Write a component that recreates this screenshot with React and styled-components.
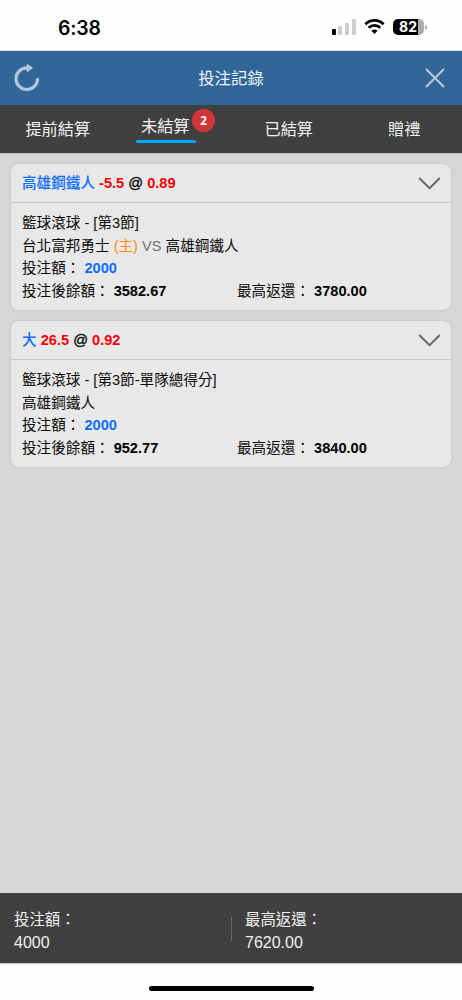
import React from "react";
import styled, { createGlobalStyle } from "styled-components";

const GlobalStyle = createGlobalStyle`
  * { box-sizing: border-box; }
  body {
    margin: 0;
    background: #fff;
    font-family: "Liberation Sans", "Noto Sans CJK TC", sans-serif;
    -webkit-font-smoothing: antialiased;
  }
`;

const Screen = styled.div`
  display: flex;
  flex-direction: column;
  width: 462px;
  height: 1000px;
  overflow: hidden;
  background: #fefefe;
`;

const StatusBar = styled.header`
  display: flex;
  justify-content: space-between;
  height: 51px;
  padding: 0 35px 0 58px;
  border-bottom: 1px solid #d9dde0;
`;

const Clock = styled.span`
  margin-top: 16px;
  font: 600 19.4px/24px Inter, sans-serif;
  letter-spacing: -0.15px;
  color: #000;
`;

const StatusIcons = styled.div`
  display: flex;
  margin-top: 18px;
  height: 18px;
  svg { display: block; }
`;

const Signal = styled.div`
  display: flex;
  align-items: flex-end;
  gap: 2.6px;
  height: 16.6px;
  margin-right: 8.5px;
`;

const SignalBar = styled.i`
  width: 4px;
  height: ${(p) => p.$height}px;
  border-radius: 1.2px;
  background: ${(p) => (p.$on ? "#000" : "#cdcdcd")};
`;

const Battery = styled.div`
  display: flex;
  align-items: center;
  margin: 1px 0 0 8px;
  height: 16px;
`;

const BatteryCell = styled.div`
  width: 31px;
  height: 16px;
  padding-left: 6px;
  border-radius: 5px;
  background: linear-gradient(90deg, #000 0 25px, #ababab 25px);
  font: 700 14px/16px Inter, sans-serif;
  letter-spacing: 0.1px;
  color: #fff;
`;

const BatteryTip = styled.i`
  width: 2px;
  height: 5px;
  margin-left: 1px;
  border-radius: 0 2px 2px 0;
  background: #b5b5b5;
`;

const TitleBar = styled.div`
  display: grid;
  grid-template-columns: 60px 1fr 60px;
  align-items: center;
  height: 54px;
  background: #316698;
  color: #eef3f7;
`;

const Title = styled.h1`
  margin: 0 0 1px;
  font-size: 16.4px;
  font-weight: 400;
  line-height: 24px;
  text-align: center;
`;

const IconButton = styled.button`
  display: flex;
  justify-content: ${(p) => (p.$end ? "flex-end" : "flex-start")};
  padding: ${(p) => (p.$end ? "0 17px 1px 0" : "0 0 3px 13px")};
  border: 0;
  background: none;
  color: #b4c7da;
  svg { display: block; }
`;

const Tabs = styled.nav`
  display: grid;
  grid-template-columns: repeat(4, 1fr);
  height: 48px;
  background: #404040;
`;

const Tab = styled.div`
  display: flex;
  flex-direction: column;
  align-items: center;
  padding-top: ${(p) => (p.$active ? "9px" : "12px")};
  color: #f1f1f1;
  font-size: 16.2px;
  line-height: 24px;
`;

const TabLabel = styled.span`
  position: relative;
  left: ${(p) => p.$shift || 0}px;
`;

const Underline = styled.i`
  width: 60px;
  height: 3.4px;
  margin: 2px 15px 0 0;
  border-radius: 2px;
  background: #00a6ff;
`;

const Badge = styled.span`
  position: absolute;
  left: 51px;
  top: -5px;
  width: 23px;
  height: 23px;
  border-radius: 50%;
  background: #d23539;
  color: #fff;
  font: 700 11.5px/23px "Noto Sans", sans-serif;
  text-align: center;
`;

const Bets = styled.main`
  flex: 1;
  display: flex;
  flex-direction: column;
  gap: 11px;
  padding: 11px 11px 0;
  background: #d7d7d7;
  box-shadow: inset 0 1px #bdbdbd;
`;

const Card = styled.article`
  height: 146px;
  border-radius: 8px;
  background: #e8e8e8;
  box-shadow: 0 0 3px rgba(0, 0, 0, 0.12);
  font-size: 14.6px;
  color: #0c0c0c;
`;

const CardHead = styled.div`
  display: flex;
  align-items: center;
  justify-content: space-between;
  height: 39px;
  padding: 0 11px;
  border-bottom: 1px solid #c8c8c8;
  line-height: 22px;
  svg { display: block; }
`;

const Pick = styled.div`
  font-weight: 500;
  color: #0d6efd;
`;

const Odds = styled.b`
  color: ${(p) => (p.$plain ? "#111" : "#fb0007")};
  font-weight: ${(p) => (p.$plain ? 400 : 700)};
  -webkit-text-stroke: ${(p) => (p.$plain ? "0.4px #111" : "0")};
`;

const CardBody = styled.div`
  padding: 9px 11px;
  line-height: 22.6px;
  white-space: nowrap;
`;

const Line = styled.div`
  display: grid;
  grid-template-columns: ${(p) => (p.$split ? "215px 1fr" : "1fr")};
`;

const Amount = styled.b`
  color: ${(p) => (p.$blue ? "#0d6efd" : "#000")};
`;

const Home = styled.span`
  color: #fb8c0a;
`;

const Versus = styled.span`
  color: #707070;
`;

const Totals = styled.footer`
  display: grid;
  grid-template-columns: 1fr 1fr;
  height: 70px;
  padding-top: 16px;
  background: #404040;
  color: #f0f0f0;
`;

const Total = styled.div`
  position: relative;
  padding-left: 14px;
  font-size: 15.4px;
  line-height: 22.5px;
  & + &::before {
    content: "";
    position: absolute;
    left: 0;
    top: 8px;
    width: 1px;
    height: 24px;
    background: #686868;
  }
`;

const TotalValue = styled.div`
  font-size: 16px;
`;

const HomeArea = styled.div`
  display: flex;
  justify-content: center;
  height: 37px;
  padding-top: 22px;
  border-top: 1px solid #c6c6c6;
`;

const HomeIndicator = styled.i`
  width: 165px;
  height: 5.4px;
  border-radius: 3px;
  background: #000;
`;

const bets = [
  {
    pick: "高雄鋼鐵人",
    line: "-5.5",
    odds: "0.89",
    market: "籃球滾球 - [第3節]",
    home: "台北富邦勇士",
    away: "高雄鋼鐵人",
    balance: "3582.67",
    payout: "3780.00",
  },
  {
    pick: "大",
    line: "26.5",
    odds: "0.92",
    market: "籃球滾球 - [第3節-單隊總得分]",
    away: "高雄鋼鐵人",
    balance: "952.77",
    payout: "3840.00",
  },
];

function BetCard({ bet }) {
  return (
    <Card>
      <CardHead>
        <Pick>
          {bet.pick} <Odds>{bet.line}</Odds> <Odds $plain>@</Odds> <Odds>{bet.odds}</Odds>
        </Pick>
        <svg width="22" height="13" viewBox="0 0 22 13" fill="none" stroke="#676767" strokeWidth="2">
          <path d="M1.2 1 11.6 11.2 21.8 1" />
        </svg>
      </CardHead>
      <CardBody>
        <Line>{bet.market}</Line>
        <Line>
          {bet.home ? (
            <span>
              {bet.home} <Home>(主)</Home> <Versus>VS</Versus> {bet.away}
            </span>
          ) : (
            <span>{bet.away}</span>
          )}
        </Line>
        <Line>
          <span>投注額： <Amount $blue>2000</Amount></span>
        </Line>
        <Line $split>
          <span>投注後餘額： <Amount>{bet.balance}</Amount></span>
          <span>最高返還： <Amount>{bet.payout}</Amount></span>
        </Line>
      </CardBody>
    </Card>
  );
}

export default function App() {
  return (
    <Screen>
      <GlobalStyle />
      <StatusBar>
        <Clock>6:38</Clock>
        <StatusIcons>
          <Signal>
            <SignalBar $on $height={6} />
            <SignalBar $height={8.6} />
            <SignalBar $height={12} />
            <SignalBar $height={15.4} />
          </Signal>
          <svg width="21" height="17" viewBox="0 0 21 17" fill="none" stroke="#000" strokeWidth="2.7">
            <path d="M1.4 6.2Q5.3 2.4 10.5 2.4T19.6 6.2" />
            <path d="M4.7 9.8Q7.2 7.3 10.5 7.3T16.3 9.8" />
            <path d="M7.4 12.8Q10.5 10.2 13.6 12.8L10.5 16Z" fill="#000" stroke="none" />
          </svg>
          <Battery>
            <BatteryCell>82</BatteryCell>
            <BatteryTip />
          </Battery>
        </StatusIcons>
      </StatusBar>
      <TitleBar>
        <IconButton aria-label="重新整理">
          <svg width="28" height="30" viewBox="0 0 28 30">
            <path d="M14 5.9A10.8 10.8 0 1 0 24.6 16.3" fill="none" stroke="currentColor" strokeWidth="3.2" />
            <path d="M13.8 1.5 20.2 6 13.8 10.5Z" fill="currentColor" />
          </svg>
        </IconButton>
        <Title>投注記錄</Title>
        <IconButton $end aria-label="關閉">
          <svg width="20" height="20" viewBox="0 0 20 20" fill="none" stroke="currentColor" strokeWidth="2.2">
            <path d="M1 1 19 19M19 1 1 19" />
          </svg>
        </IconButton>
      </TitleBar>
      <Tabs>
        <Tab><TabLabel>提前結算</TabLabel></Tab>
        <Tab $active>
          <TabLabel $shift={-8}>未結算<Badge>2</Badge></TabLabel>
          <Underline />
        </Tab>
        <Tab><TabLabel>已結算</TabLabel></Tab>
        <Tab><TabLabel>贈禮</TabLabel></Tab>
      </Tabs>
      <Bets>
        {bets.map((bet) => <BetCard key={bet.pick} bet={bet} />)}
      </Bets>
      <Totals>
        <Total>
          投注額：
          <TotalValue>4000</TotalValue>
        </Total>
        <Total>
          最高返還：
          <TotalValue>7620.00</TotalValue>
        </Total>
      </Totals>
      <HomeArea>
        <HomeIndicator />
      </HomeArea>
    </Screen>
  );
}
